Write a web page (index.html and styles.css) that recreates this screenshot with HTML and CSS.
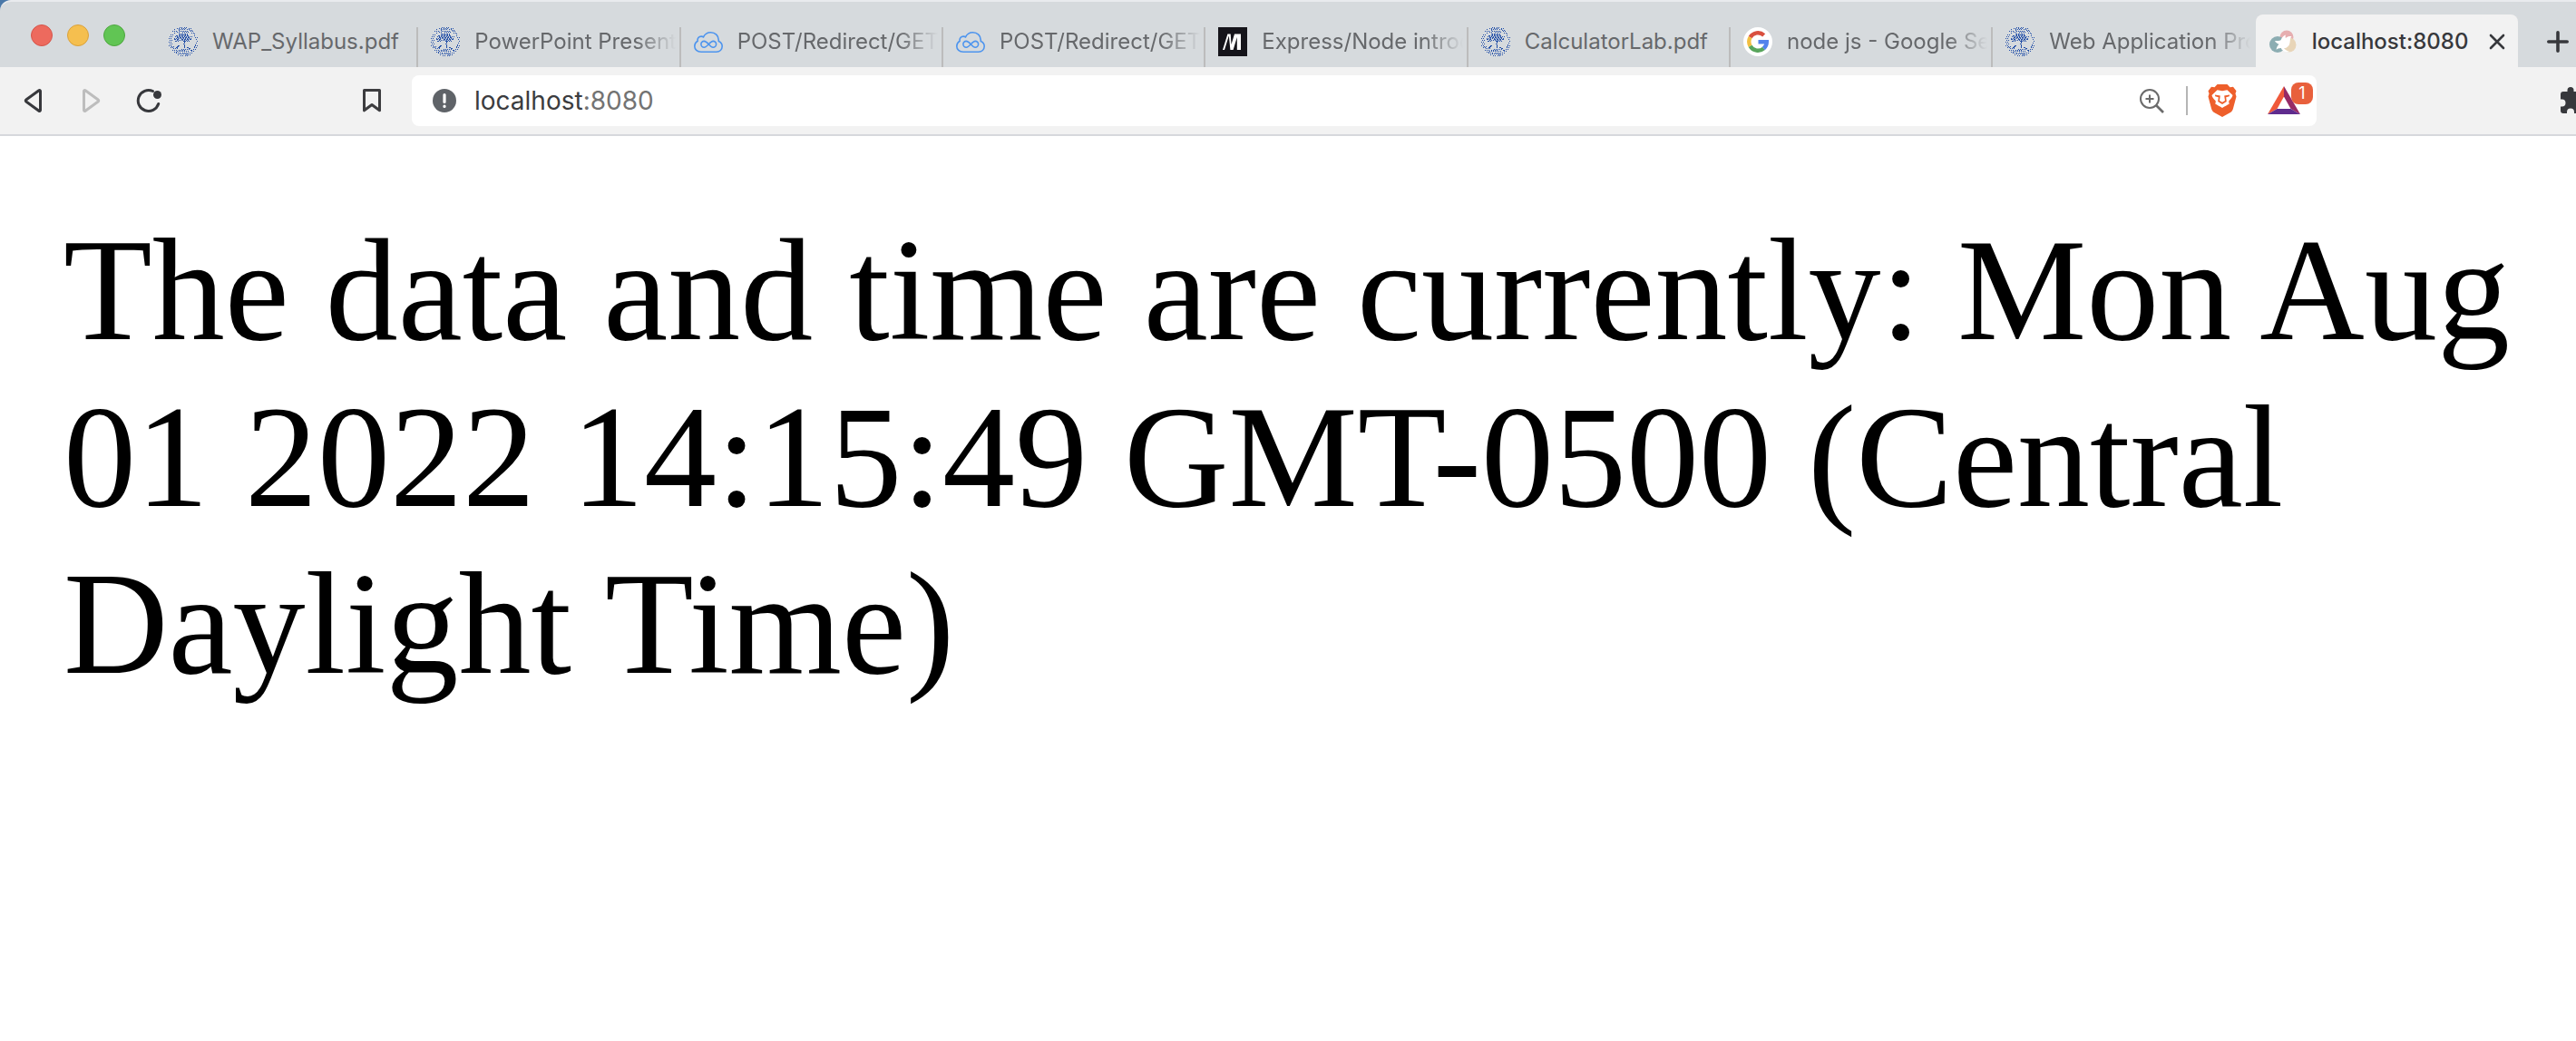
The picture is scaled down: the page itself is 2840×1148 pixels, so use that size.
FILE: index.html
```html
<!DOCTYPE html>
<html lang="en">
<head>
<meta charset="utf-8">
<title>localhost:8080</title>
<link rel="stylesheet" href="styles.css">
</head>
<body>
<svg class="defs" aria-hidden="true">
  <symbol id="seal" viewBox="0 0 32 32">
    <g fill="none" stroke="#2450a8" stroke-width="1" shape-rendering="crispEdges">
      <path stroke-dasharray="1 1" d="M12 .5h3M17 .5h4M9 1.500h3M14 1.500h5M22 1.500h3M6 2.500h2M11 2.500h7M20 2.500h3M4 4.500h5M12 4.500h9M24 4.500h3M9 5.500h3M15 5.500h7M11 3.500h2M23 3.500h3M25 6.500h3M6 6.500h1"/>
      <path stroke-dasharray="2 1" d="M11 7.500h10M8 9.500h15M9 11.500h14M6 13.500h5M14 13.500h12M7 15.500h4"/>
      <path stroke-dasharray="1 1" d="M12 8.500h10M7 10.500h19M6 12.500h19M9 14.500h14M16 15.500h7"/>
      <path stroke-dasharray="1 1" d="M2 8.500h3M1 10.500h3M0 12.500h4M1 14.500h3M0 16.500h3M1 18.500h3M0 20.500h4M3 21.500h3M2 22.500h3M5 23.500h5M4 25.500h6M28 9.500h2M29 11.500h3M30 13.500h2M31 15.500h1M30 17.500h2M29 19.500h2M31 20.500h1M28 22.500h3M27 24.500h3M25 26.500h3"/>
      <path stroke-dasharray="1 1" d="M14 24.500h9M11 25.500h8M9 26.500h13M8 28.500h5M15 28.500h9M12 29.500h9M13 31.500h3M18 31.500h3M10 30.500h2M19 30.500h5M6 27.500h3M23 28.500h4"/>
      <path d="M17.500 15v3M16.500 18v1M17.500 19v4M9 21.500h2M10 20.500h2M8 22.500h2M20 22.500h2M22 23.500h2M24 25.500h2M28 7.500h1M29 20.500h1M28 21.500h1"/>
    </g>
  </symbol>
  <symbol id="cloud" viewBox="0 0 32 32">
    <g fill="none" stroke="#4d94ee" stroke-width="1.600">
      <path d="M8 27.200C3.500 27.200.8 24.500.8 21c0-2.600 1.400-4.600 3.300-5.700-.6-3 1.500-5.200 4-5.200 1 0 1.700.2 2.400.7C12 7.600 15 5.700 18.500 5.700c5 0 8.800 3.700 8.800 8.500v1.300c2.400 1 3.900 3.100 3.900 5.600 0 3.500-2.700 6.100-6.500 6.100z"/>
      <path d="M16.200 18.800c-2-2.300-3.300-3.400-4.900-3.400a3.400 3.400 0 0 0 0 6.800c3.600 0 6.400-6.800 9.900-6.800a3.400 3.400 0 0 1 0 6.800c-1.600 0-3-1.100-5-3.400z"/>
    </g>
  </symbol>
</svg>

<header class="browser">
  <div class="tabstrip">
    <div class="lights">
      <button class="light close" aria-label="Close window"></button>
      <button class="light minimize" aria-label="Minimize window"></button>
      <button class="light zoom" aria-label="Zoom window"></button>
    </div>
    <nav class="tabs" aria-label="Tabs">
      <a class="tab" href="#"><svg class="favicon"><use href="#seal"/></svg><span class="title short">WAP_Syllabus.pdf</span></a>
      <a class="tab" href="#"><svg class="favicon"><use href="#seal"/></svg><span class="title">PowerPoint Present</span></a>
      <a class="tab" href="#"><svg class="favicon"><use href="#cloud"/></svg><span class="title">POST/Redirect/GET</span></a>
      <a class="tab" href="#"><svg class="favicon"><use href="#cloud"/></svg><span class="title">POST/Redirect/GET</span></a>
      <a class="tab" href="#"><svg class="favicon" viewBox="0 0 32 32"><path fill="#15141a" d="M0 0h32v32H0z"/><path fill="#fff" d="M5 25l5.400-17.500h2L7 25zM11.500 7.500h2.200L14.500 19 18 7.500h4.800V25h-2V11L16.600 25h-3.200L12 11zM22.800 7.500H25V25h-2.200z"/></svg><span class="title">Express/Node introd</span></a>
      <a class="tab" href="#"><svg class="favicon"><use href="#seal"/></svg><span class="title short">CalculatorLab.pdf</span></a>
      <a class="tab" href="#"><svg class="favicon" viewBox="0 0 32 32"><circle cx="16" cy="16" r="16" fill="#fff"/><g fill="none" stroke-width="4.400"><path stroke="#d9503f" d="M7.600 11.200A9.800 9.800 0 0 1 22.700 8.900"/><path stroke="#f2bf42" d="M7.600 20.800a9.800 9.800 0 0 1 0-9.600"/><path stroke="#58a55c" d="M7.600 20.800a9.800 9.800 0 0 0 14.900 2.500"/><path stroke="#5383ec" d="M16.500 16.200h9.300a9.800 9.800 0 0 1-3.400 7.300"/></g></svg><span class="title">node js - Google Se</span></a>
      <a class="tab" href="#"><svg class="favicon"><use href="#seal"/></svg><span class="title">Web Application Pro</span></a>
      <div class="tab active">
        <svg class="favicon" viewBox="0 0 32 32"><circle cx="20" cy="11" r="7.500" fill="#e6aeb0"/><circle cx="22.500" cy="19.500" r="8" fill="#e8d5b8"/><circle cx="10" cy="19" r="9" fill="#8cadb2"/><path fill="#fff" d="M7 15c3 0 5 0 6.500-.8C15 11 16.500 9.200 19 8.500c-.6 1.500-.5 2.500 0 3.500 2-1.800 4-2.200 6.500-1.800-1.800 1.500-1.600 4.300-2 6.800-.5 3.500-3 6-6.200 6.300.5 1.500 3 2.700 6 3.700-5 1-8.500-1-9.500-4-2 0-4.500 1-5.300 1.800.5-2.800 1.500-4.600 3-6C10 18 7.500 17 7 15z"/></svg>
        <span class="title short">localhost:8080</span>
        <button class="tab-close" aria-label="Close tab"><svg viewBox="0 0 18 18"><path d="M2 2l14 14M16 2L2 16" fill="none" stroke="#37383c" stroke-width="2.600" stroke-linecap="round"/></svg></button>
      </div>
    </nav>
    <button class="new-tab" aria-label="New tab"><svg viewBox="0 0 24 24"><path d="M12 1.800v20.400M1.800 12h20.400" fill="none" stroke="#37383c" stroke-width="3.600" stroke-linecap="round"/></svg></button>
  </div>

  <div class="toolbar">
    <div class="nav">
      <button class="icon" aria-label="Back"><svg viewBox="0 0 32 32"><path d="M22.500 5.500v21a1 1 0 0 1-1.600.8L6.800 17a1.200 1.200 0 0 1 0-2L20.900 4.700a1 1 0 0 1 1.600.8z" fill="none" stroke="#37383c" stroke-width="3"/></svg></button>
      <button class="icon" aria-label="Forward" disabled><svg viewBox="0 0 32 32"><path d="M6.500 5.500v21a1 1 0 0 0 1.600.8L22.200 17a1.200 1.200 0 0 0 0-2L8.100 4.700a1 1 0 0 0-1.600.8z" fill="none" stroke="#bdbdbd" stroke-width="3"/></svg></button>
      <button class="icon" aria-label="Reload"><svg viewBox="0 0 32 32"><path d="M18.500 5.500A11.500 11.500 0 1 0 24.700 19.500" fill="none" stroke="#37383c" stroke-width="3" stroke-linecap="round"/><circle cx="23.500" cy="9.500" r="4.500" fill="#37383c"/></svg></button>
    </div>
    <button class="icon" aria-label="Bookmark this page"><svg viewBox="0 0 32 32"><path d="M7.500 4.500h17v22.300L16 20.500l-8.500 6.300z" fill="none" stroke="#3c3c3f" stroke-width="3" stroke-linejoin="round"/></svg></button>
    <div class="omnibox">
      <svg class="info" viewBox="0 0 26 26"><circle cx="13" cy="13" r="13" fill="#5f6368"/><path d="M13 6.500v8M13 19v.500" stroke="#fff" stroke-width="3.200" stroke-linecap="round"/></svg>
      <a class="url" href="#">localhost<span class="port">:8080</span></a>
      <button class="icon" aria-label="Zoom"><svg viewBox="0 0 32 32"><g fill="none" stroke="#6b6b6b" stroke-width="2"><circle cx="14" cy="14" r="10"/><path d="M21 21l8 8" stroke-width="2.600"/><path d="M14 9.500v9M9.500 14h9"/></g></svg></button>
      <span class="divider"></span>
      <button class="shield" aria-label="Brave Shields"><svg viewBox="0 0 32 36"><path fill="#ee5f2b" d="M10.500 0h11l3 3.200 3.500-.5 3.500 4.500-1 3 1 3.300-3.600 13.500c-.6 2-1.300 2.900-2.900 4L16 36l-9-5c-1.600-1.100-2.300-2-2.900-4L.5 13.500l1-3.300-1-3L4 2.700l3.500.5z"/><path fill="#fff" d="M16 7.200c2 0 3.500-.9 5.500-.9l6 5.700c-.4 2.500-2.300 4.300-4 6-.6 1-.2 2 .3 3.500C21.500 23 18.500 24.300 16 26c-2.500-1.700-5.500-3-7.800-4.500.5-1.500.9-2.500.3-3.500-1.700-1.700-3.600-3.500-4-6l6-5.700c2 0 3.500.9 5.500.9z"/><path fill="#ee5f2b" d="M8 11.500l5.800 1L13 18l3 1.800L19 18l-.8-5.500 5.800-1-.2 1.700-3.600 1 .6 4.800-4.800 3-4.800-3 .6-4.800-3.600-1z"/></svg></button>
      <button class="rewards" aria-label="Brave Rewards"><svg viewBox="0 0 36 32"><path fill="#f0593a" d="M18 0v11.500L10.500 25 0 31z"/><path fill="#962a66" d="M18 0l18 31-10.500-6L18 11.500z"/><path fill="#5f2c8e" d="M0 31l10.500-6h15L36 31z"/></svg><span class="badge">1</span></button>
    </div>
    <button class="icon extensions" aria-label="Extensions"><svg viewBox="0 0 32 32"><path fill="#37383c" d="M1 9a3 3 0 0 1 3-3h4.500V4.500a3.500 3.500 0 0 1 7 0V6H20a3 3 0 0 1 3 3v4.500h1.500a3.500 3.500 0 0 1 0 7H23V27a3 3 0 0 1-3 3h-4v-1.500a4 4 0 0 0-8 0V30H4a3 3 0 0 1-3-3v-4.500h1.500a4 4 0 0 0 0-8H1z"/></svg></button>
  </div>
</header>

<main class="page">
  <p class="message">The data and time are currently: Mon Aug 01 2022 14:15:49 GMT-0500 (Central Daylight Time)</p>
</main>
</body>
</html>
```

FILE: styles.css
```css
* { box-sizing: border-box; }

body {
  margin: 0;
  background: #fff;
  font-family: Inter, "Liberation Sans", sans-serif;
  overflow-x: hidden;
}

button {
  margin: 0;
  padding: 0;
  border: 0;
  background: none;
  font: inherit;
}

a { color: inherit; text-decoration: none; }
svg { display: block; }
.defs { display: none; }

.browser { background: #4a78a8; }

.tabstrip {
  display: flex;
  height: 74px;
  padding-left: 34px;
  border-top: 2px solid #e9ebee;
  border-top-left-radius: 12px;
  background: #d6dadd;
}

.lights {
  display: flex;
  flex: none;
  gap: 16px;
  width: 138px;
  padding-top: 25px;
}

.light { width: 24px; height: 24px; border-radius: 50%; }
.close { background: #ed6a5e; border: 1px solid #d5544a; }
.minimize { background: #f5bf4f; border: 1px solid #d9a13c; }
.zoom { background: #61c554; border: 1px solid #4ea73f; }

.tabs { display: flex; flex: 1; min-width: 0; padding-top: 14px; }

.tab {
  position: relative;
  display: flex;
  flex: 0 1 290px;
  align-items: center;
  min-width: 0;
  padding: 2px 6px 0 14px;
  color: #66686b;
  font-size: 24px;
}

.tab:not(.active)::after {
  content: "";
  position: absolute;
  right: 0;
  bottom: 0;
  width: 2px;
  height: 44px;
  background: #bcbcbc;
}

.tab:nth-last-child(2)::after { display: none; }

.favicon { flex: none; width: 32px; height: 32px; margin-right: 16px; }

.title {
  flex: 1;
  min-width: 0;
  overflow: hidden;
  line-height: 32px;
  white-space: nowrap;
  mask-image: linear-gradient(to right, #000 calc(100% - 44px), transparent);
}

.title.short { mask-image: none; }

.active {
  padding: 2px 14px 0;
  border-radius: 8px 8px 0 0;
  background: #f2f2f2;
  color: #37383c;
  font-weight: 500;
}

.tab-close svg { width: 18px; height: 18px; }

.new-tab { flex: none; width: 64px; padding: 0 0 0 32px; }
.new-tab svg { width: 24px; height: 24px; margin-top: 16px; }

.toolbar {
  display: flex;
  align-items: center;
  height: 76px;
  padding-left: 22px;
  border-bottom: 2px solid #d6d8dc;
  background: #f2f2f2;
}

.nav { display: flex; flex: none; gap: 32px; width: 372px; }
.icon { flex: none; width: 32px; height: 32px; }

.omnibox {
  display: flex;
  flex: 1;
  align-items: center;
  height: 56px;
  margin-left: 28px;
  padding: 0 4px 0 23px;
  border-radius: 8px;
  background: #fff;
}

.info { flex: none; width: 26px; height: 26px; }

.url {
  flex: 1;
  padding-left: 20px;
  color: #3b3c3f;
  font-size: 28px;
}

.port { color: #737373; }
.divider { width: 2px; height: 32px; margin: 0 22px; background: #b5b5b5; }
.shield svg { width: 32px; height: 36px; }

.rewards { position: relative; width: 50px; margin-left: 34px; }
.rewards svg { width: 36px; height: 32px; }

.badge {
  position: absolute;
  top: -4px;
  right: 0;
  width: 24px;
  height: 24px;
  border-radius: 8px;
  background: #e8603c;
  color: #fff;
  font-size: 18px;
  line-height: 24px;
}

.extensions { margin: 0 -14px 0 268px; }

.page { padding: 78px 70px; }

.message {
  margin: 0;
  color: #000;
  font-family: "Liberation Serif", serif;
  font-size: 160px;
  line-height: 184px;
}
```
